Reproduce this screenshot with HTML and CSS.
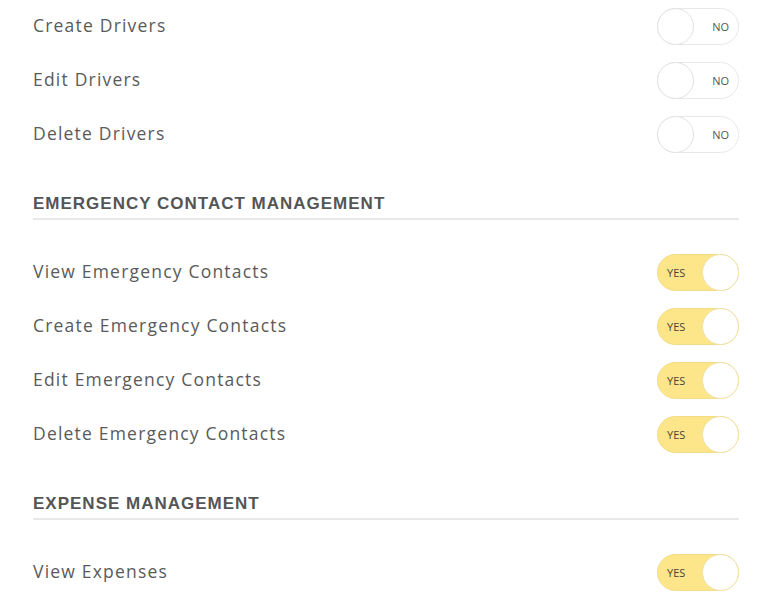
FILE: index.html
```html
<!DOCTYPE html>
<html lang="en">
<head>
  <meta charset="UTF-8" />
  <meta name="viewport" content="width=device-width, initial-scale=1.0"/>
  <title>Permissions</title>
  <link rel="stylesheet" href="styles.css">
</head>
<body>

  <div class="permissions">
    <div class="perm-row">
      <span class="perm-label">Create Drivers</span>
      <label class="switch"><input type="checkbox"><span class="track"><span class="state">NO</span><span class="knob"></span></span></label>
    </div>
    <div class="perm-row">
      <span class="perm-label">Edit Drivers</span>
      <label class="switch"><input type="checkbox"><span class="track"><span class="state">NO</span><span class="knob"></span></span></label>
    </div>
    <div class="perm-row">
      <span class="perm-label">Delete Drivers</span>
      <label class="switch"><input type="checkbox"><span class="track"><span class="state">NO</span><span class="knob"></span></span></label>
    </div>

    <h3 class="section-title">EMERGENCY CONTACT MANAGEMENT</h3>
    <div class="perm-row">
      <span class="perm-label">View Emergency Contacts</span>
      <label class="switch"><input type="checkbox" checked><span class="track"><span class="state">YES</span><span class="knob"></span></span></label>
    </div>
    <div class="perm-row">
      <span class="perm-label">Create Emergency Contacts</span>
      <label class="switch"><input type="checkbox" checked><span class="track"><span class="state">YES</span><span class="knob"></span></span></label>
    </div>
    <div class="perm-row">
      <span class="perm-label">Edit Emergency Contacts</span>
      <label class="switch"><input type="checkbox" checked><span class="track"><span class="state">YES</span><span class="knob"></span></span></label>
    </div>
    <div class="perm-row">
      <span class="perm-label">Delete Emergency Contacts</span>
      <label class="switch"><input type="checkbox" checked><span class="track"><span class="state">YES</span><span class="knob"></span></span></label>
    </div>

    <h3 class="section-title">EXPENSE MANAGEMENT</h3>
    <div class="perm-row">
      <span class="perm-label">View Expenses</span>
      <label class="switch"><input type="checkbox" checked><span class="track"><span class="state">YES</span><span class="knob"></span></span></label>
    </div>
  </div>

  <script>
    // Flip the YES / NO label when a switch is toggled
    document.querySelectorAll('.switch input').forEach(input => {
      input.addEventListener('change', () => {
        const state = input.parentElement.querySelector('.state');
        state.textContent = input.checked ? 'YES' : 'NO';
      });
    });
  </script>
</body>
</html>
```

FILE: styles.css
```css
body {
  margin: 0;
  font-family: "Open Sans", Arial, sans-serif;
  background-color: #fff;
  color: #555;
}
.permissions {
  width: 706px;
  margin: -1px 0 0 33px;
}
.perm-row {
  display: flex;
  justify-content: space-between;
  align-items: center;
  height: 54px;
}
.perm-label {
  padding-bottom: 3px;
  font-size: 17.5px;
  letter-spacing: 1.2px;
  color: #5a5a5a;
}
.section-title {
  margin: 33px 0 25px;
  padding-bottom: 4px;
  border-bottom: 2px solid #e8e8e8;
  font-family: "Liberation Sans", Arial, sans-serif;
  font-size: 17px;
  line-height: 20px;
  font-weight: bold;
  letter-spacing: 1px;
  color: #555;
}
.switch {
  cursor: pointer;
}
.switch input {
  display: none;
}
.track {
  display: flex;
  align-items: center;
  justify-content: flex-end;
  position: relative;
  width: 82px;
  height: 37px;
  box-sizing: border-box;
  border: 1px solid #e8e8e8;
  border-radius: 19px;
  background: #fff;
}
.state {
  font-size: 11px;
  color: #555;
  margin-right: 9px;
}
.knob {
  position: absolute;
  top: -1px;
  left: -1px;
  width: 37px;
  height: 37px;
  box-sizing: border-box;
  border: 1px solid #e2e2e2;
  border-radius: 50%;
  background: #fff;
}
.switch input:checked + .track {
  justify-content: flex-start;
  background: #fde68a;
  border-color: #f3dc86;
}
.switch input:checked + .track .state {
  margin: 0 0 0 9px;
  color: #4a4536;
}
.switch input:checked + .track .knob {
  left: auto;
  right: -1px;
  border-color: #efe1a8;
}
```
